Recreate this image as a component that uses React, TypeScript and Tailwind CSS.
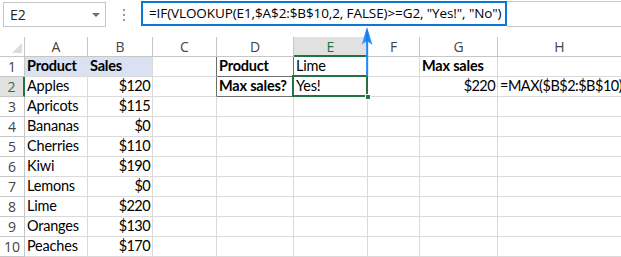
type CellDef = {
  t?: string;
  b?: boolean;
  r?: boolean;
  cls?: string;
};

const COLS = ["A", "B", "C", "D", "E", "F", "G", "H"];

const ROWS: CellDef[][] = [
  [
    { t: "Product", b: true, cls: "bg-[#d9e1f2] border-r-[#d9e1f2]" },
    { t: "Sales", b: true, cls: "bg-[#d9e1f2]" },
    { cls: "border-r-[#6e6e6e]" },
    { t: "Product", b: true, cls: "border-r-[#6e6e6e] border-b-[#6e6e6e]" },
    { t: "Lime" },
    {},
    { t: "Max sales", b: true },
    {},
  ],
  [
    { t: "Apples" },
    { t: "$120", r: true },
    { cls: "border-r-[#6e6e6e]" },
    { t: "Max sales?", b: true, cls: "border-r-[#6e6e6e] border-b-[#6e6e6e]" },
    { t: "Yes!" },
    {},
    { t: "$220", r: true },
    { t: "=MAX($B$2:$B$10)", cls: "tracking-[-0.5px]" },
  ],
  [{ t: "Apricots" }, { t: "$115", r: true }],
  [{ t: "Bananas" }, { t: "$0", r: true }],
  [{ t: "Cherries" }, { t: "$110", r: true }],
  [{ t: "Kiwi" }, { t: "$190", r: true }],
  [{ t: "Lemons" }, { t: "$0", r: true }],
  [{ t: "Lime" }, { t: "$220", r: true }],
  [{ t: "Oranges" }, { t: "$130", r: true }],
  [{ t: "Peaches" }, { t: "$170", r: true }],
];

function Cell({ c }: { c: CellDef }) {
  return (
    <div
      className={`h-[20px] border-r border-b border-[#dadada] flex items-end px-[2px] pb-[1px] text-[14.5px] leading-[18px] text-black whitespace-nowrap overflow-visible ${
        c.r ? "justify-end tracking-[-0.6px]" : "justify-start tracking-[-0.2px]"
      } ${c.b ? "font-bold" : "font-normal"} ${c.cls ?? ""}`}
    >
      {c.t}
    </div>
  );
}

function SelectedCell() {
  return (
    <div className="relative h-[20px] border-r border-b border-[#dadada] flex items-end px-[2px] pb-[1px] text-[14.5px] leading-[18px] tracking-[-0.2px] text-black">
      Yes!
      <div className="absolute left-[-2px] top-[-2px] w-[76px] h-[22px] border-2 border-[#217346]" />
      <div className="absolute right-[-4px] bottom-[-4px] w-[6px] h-[6px] bg-[#217346] border border-white" />
    </div>
  );
}

function NameBox() {
  return (
    <div className="ml-[3px] mt-[2px] w-[103px] h-[25px] border border-[#c6c6c6] flex items-center pl-[6px] pr-[5px]">
      <span className="text-[14px] text-[#222] font-['Open_Sans',sans-serif]">E2</span>
      <span className="ml-auto w-0 h-0 border-l-[4px] border-r-[4px] border-t-[4px] border-l-transparent border-r-transparent border-t-[#6f6f6f]" />
    </div>
  );
}

function Dots() {
  return (
    <div className="w-[35px] flex flex-col items-center justify-center gap-[3px] pt-[2px]">
      <span className="w-[2px] h-[2px] bg-[#9a9a9a]" />
      <span className="w-[2px] h-[2px] bg-[#9a9a9a]" />
      <span className="w-[2px] h-[2px] bg-[#9a9a9a]" />
    </div>
  );
}

function FormulaBar() {
  return (
    <div className="flex-1 flex h-[26px] mt-[1px]">
      <div className="w-[366px] h-[25px] border-2 border-[#0b78d8] flex items-center pl-[6px] text-[13.5px] text-black whitespace-nowrap font-['Open_Sans',sans-serif] tracking-[-0.1px]">
        =IF(VLOOKUP(E1,$A$2:$B$10,2, FALSE)&gt;=G2, "Yes!", "No")
      </div>
      <div className="flex-1 h-[26px] border-t border-b border-[#c6c6c6]" />
    </div>
  );
}

function Arrow() {
  return (
    <svg className="absolute left-[360px] top-[26px]" width="14" height="52" viewBox="0 0 14 52">
      <defs>
        <linearGradient id="ag" x1="0" x2="1" y1="0" y2="0">
          <stop offset="0" stopColor="#5fb0ff" />
          <stop offset="0.5" stopColor="#0f7cf0" />
          <stop offset="1" stopColor="#3f9bff" />
        </linearGradient>
      </defs>
      <rect x="6" y="10" width="2.2" height="40" fill="url(#ag)" />
      <polygon points="7,1 12.5,19 7,15 1.5,19" fill="url(#ag)" />
    </svg>
  );
}

export default function App() {
  return (
    <div className="relative w-[621px] h-[257px] overflow-hidden bg-white font-['Lato','Carlito',sans-serif]">
      <div className="flex h-[27px]">
        <NameBox />
        <Dots />
        <FormulaBar />
      </div>
      <div className="h-[10px]" />
      <div className="grid grid-cols-[25px_63px_65px_64px_77px_74px_52px_78px_124px]">
        <div className="relative h-[20px] border-r border-b border-[#c6c6c6]">
          <svg className="absolute right-[2px] bottom-[3px]" width="10" height="10" viewBox="0 0 10 10">
            <polygon points="10,0 10,10 0,10" fill="#dcdcdc" />
          </svg>
        </div>
        {COLS.map((c) =>
          c === "E" ? (
            <div
              key={c}
              className="h-[20px] bg-[#e1e1e1] border-r border-[#c6c6c6] border-b-2 border-b-[#217346] flex items-center justify-center text-[14px] text-[#217346] font-['Open_Sans',sans-serif]"
            >
              {c}
            </div>
          ) : (
            <div
              key={c}
              className="h-[20px] border-r border-b border-[#c6c6c6] flex items-center justify-center text-[14px] text-[#444] font-['Open_Sans',sans-serif]"
            >
              {c}
            </div>
          )
        )}
        {ROWS.map((row, i) => (
          <div key={i} className="contents">
            {i === 1 ? (
              <div className="h-[20px] bg-[#e1e1e1] border-r-2 border-r-[#217346] border-b border-b-[#c6c6c6] flex items-center justify-center text-[14px] text-[#3b6b4e] font-['Open_Sans',sans-serif]">
                {i + 1}
              </div>
            ) : (
              <div className="h-[20px] border-r border-b border-[#c6c6c6] flex items-center justify-center text-[14px] text-[#444] font-['Open_Sans',sans-serif]">
                {i + 1}
              </div>
            )}
            {COLS.map((_, j) =>
              i === 1 && j === 4 ? (
                <SelectedCell key={j} />
              ) : (
                <Cell key={j} c={row[j] ?? {}} />
              )
            )}
          </div>
        ))}
      </div>
      <Arrow />
    </div>
  );
}
